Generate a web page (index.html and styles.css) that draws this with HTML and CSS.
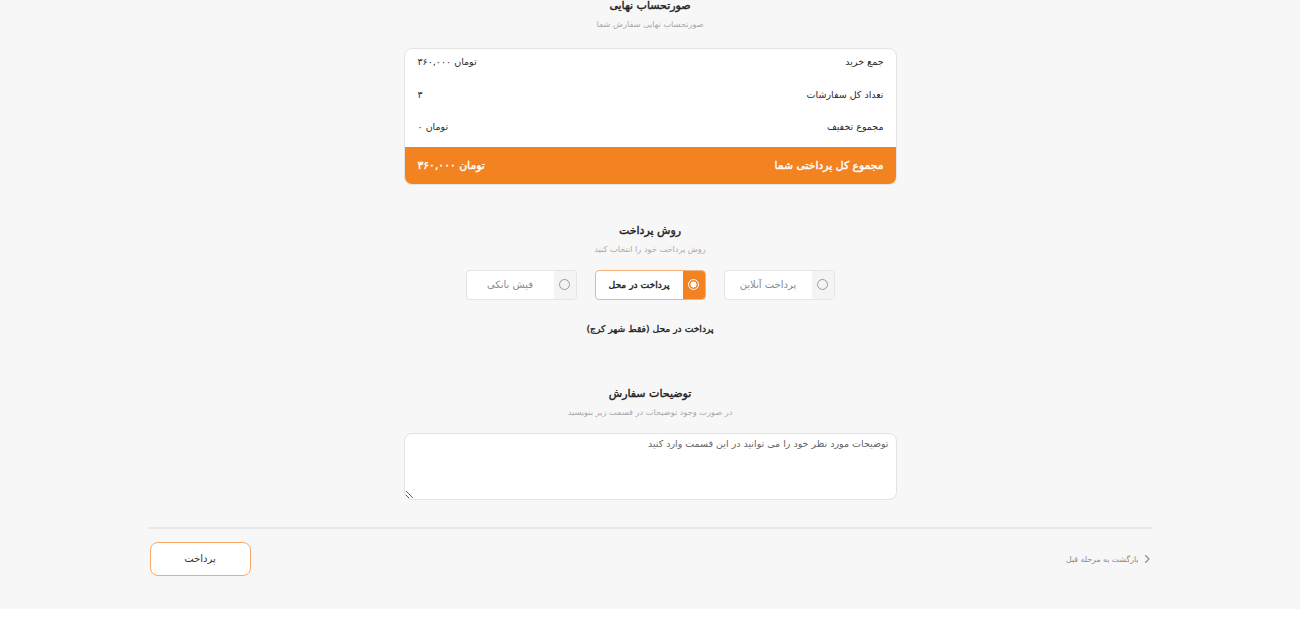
FILE: index.html
```html
<!DOCTYPE html>
<html lang="fa" dir="rtl">
<head>
    <meta charset="UTF-8">
    <meta name="viewport" content="width=device-width, initial-scale=1.0">
    <title>تکمیل سفارش</title>
    <link rel="stylesheet" href="styles.css">
</head>
<body>
    <div class="checkout">
        <section class="block invoice">
            <h2 class="block-title">صورتحساب نهایی</h2>
            <p class="block-sub">صورتحساب نهایی سفارش شما</p>

            <div class="summary">
                <div class="summary-row">
                    <span>جمع خرید</span>
                    <span>تومان ۳۶۰,۰۰۰</span>
                </div>
                <div class="summary-row">
                    <span>تعداد کل سفارشات</span>
                    <span>۳</span>
                </div>
                <div class="summary-row">
                    <span>مجموع تخفیف</span>
                    <span>تومان ۰</span>
                </div>
                <div class="summary-total">
                    <span>مجموع کل پرداختی شما</span>
                    <span>تومان ۳۶۰,۰۰۰</span>
                </div>
            </div>
        </section>

        <section class="block payment">
            <h2 class="block-title">روش پرداخت</h2>
            <p class="block-sub">روش پرداخت خود را انتخاب کنید</p>

            <div class="pay-options">
                <label class="pay-option">
                    <span class="radio-box"><span class="radio"></span></span>
                    <span class="pay-label">پرداخت آنلاین</span>
                </label>
                <label class="pay-option active">
                    <span class="radio-box"><span class="radio"></span></span>
                    <span class="pay-label">پرداخت در محل</span>
                </label>
                <label class="pay-option">
                    <span class="radio-box"><span class="radio"></span></span>
                    <span class="pay-label">فیش بانکی</span>
                </label>
            </div>

            <p class="pay-note">پرداخت در محل (فقط شهر کرج)</p>
        </section>

        <section class="block notes">
            <h2 class="block-title">توضیحات سفارش</h2>
            <p class="block-sub">در صورت وجود توضیحات در قسمت زیر بنویسید</p>
            <textarea class="notes-input" placeholder="توضیحات مورد نظر خود را می توانید در این قسمت وارد کنید"></textarea>
        </section>

        <div class="actions">
            <a href="#" class="back-link">
                <svg width="10" height="10" viewBox="0 0 10 10" fill="none" stroke="#8a8a8a" stroke-width="1.1" stroke-linecap="round" stroke-linejoin="round">
                    <path d="M3.5 1.5 L7 5 L3.5 8.5"/>
                </svg>
                بازگشت به مرحله قبل
            </a>
            <button class="pay-btn">پرداخت</button>
        </div>
    </div>
</body>
</html>
```

FILE: styles.css
```css
body {
    margin: 0;
    padding: 0;
    background-color: #fff;
    font-family: "DejaVu Sans", "Noto Sans", sans-serif;
    color: #333;
}

.checkout {
    background-color: #f7f7f7;
    padding-bottom: 33px;
}

.block {
    width: 493px;
    margin: 0 auto;
    text-align: center;
}

.invoice {
    margin-top: -4px;
}

/* DejaVu bold is very wide in Arabic script, so weight is faked with a stroke */
.block-title {
    margin: 0;
    font-size: 11px;
    line-height: 20px;
    font-weight: normal;
    color: #222;
    -webkit-text-stroke: 0.4px #222;
}

.block-sub {
    margin: 0;
    font-size: 8.2px;
    line-height: 16px;
    color: #a9a9a9;
}

.summary {
    margin-top: 16px;
    background: #fff;
    border: 1px solid #e4e4e4;
    border-radius: 8px;
    overflow: hidden;
    text-align: right;
}

.summary-row {
    display: flex;
    justify-content: space-between;
    height: 32.5px;
    box-sizing: border-box;
    padding: 5px 12px 0 13px;
    font-size: 9.5px;
    line-height: 16px;
    color: #2a2a2a;
}

.summary-total {
    display: flex;
    justify-content: space-between;
    align-items: center;
    height: 37px;
    padding: 0 12px 0 13px;
    background-color: #f38220;
    color: #fff;
    font-size: 10.8px;
    -webkit-text-stroke: 0.4px #fff;
}

.payment {
    margin-top: 36px;
}

.pay-options {
    display: flex;
    justify-content: center;
    gap: 18px;
    margin-top: 13px;
}

.pay-option {
    display: flex;
    width: 111px;
    height: 30px;
    box-sizing: border-box;
    border: 1px solid #e5e5e5;
    border-radius: 4px;
    background: #fff;
    overflow: hidden;
    cursor: pointer;
}

.radio-box {
    width: 22px;
    display: flex;
    align-items: center;
    justify-content: center;
    background-color: #f4f4f4;
}

.radio {
    width: 9px;
    height: 9px;
    border: 1.5px solid #9a9a9a;
    border-radius: 50%;
    box-sizing: content-box;
}

.pay-label {
    flex: 1;
    display: flex;
    align-items: center;
    justify-content: center;
    font-size: 10px;
    color: #8a8a8a;
}

.pay-option.active {
    border-color: #f7b27c;
}

.pay-option.active .radio-box {
    background-color: #f38220;
}

.pay-option.active .radio {
    border: 1.5px solid #fff;
    background: radial-gradient(circle, #fff 0 2.8px, #f38220 3.3px);
}

.pay-option.active .pay-label {
    font-size: 9.2px;
    color: #222;
    -webkit-text-stroke: 0.4px #222;
}

.pay-note {
    margin: 19px 0 0;
    font-size: 9.2px;
    line-height: 20px;
    color: #222;
    -webkit-text-stroke: 0.35px #222;
}

.notes {
    margin-top: 45px;
}

.notes-input {
    display: block;
    width: 100%;
    height: 67px;
    margin-top: 13px;
    box-sizing: border-box;
    border: 1px solid #e2e2e2;
    border-radius: 8px;
    padding: 3px 7px;
    font-family: inherit;
    font-size: 9.5px;
    line-height: 14px;
    background: #fff;
    outline: none;
}

.notes-input::placeholder {
    color: #666;
}

.actions {
    max-width: 1003px;
    margin: 27px auto 0;
    border-top: 2px solid #e6e6e6;
    padding-top: 13px;
    display: flex;
    justify-content: space-between;
    align-items: center;
}

.back-link {
    display: flex;
    align-items: center;
    gap: 3px;
    font-size: 7.8px;
    color: #8a8a8a;
    text-decoration: none;
    margin-top: 1px;
}

.pay-btn {
    width: 101px;
    height: 34px;
    margin-left: 1px;
    border: 1px solid #f9a868;
    border-radius: 8px;
    background: #fff;
    font-family: inherit;
    font-size: 10px;
    color: #333;
    cursor: pointer;
}
```
